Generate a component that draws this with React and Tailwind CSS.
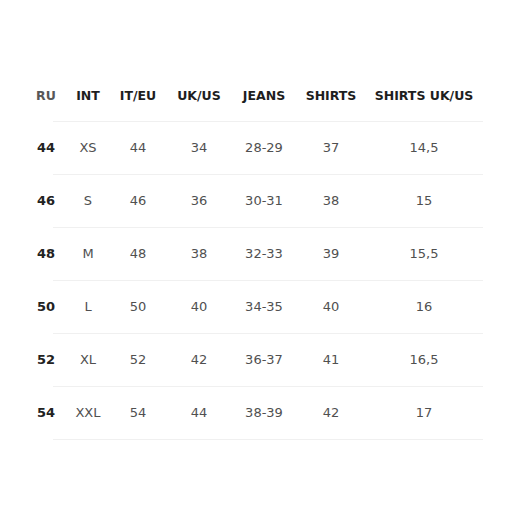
import React from "react";

const cols = [
  { label: "RU", w: "w-[32px] -ml-[23px]" },
  { label: "INT", w: "w-[52px]" },
  { label: "IT/EU", w: "w-[48px]" },
  { label: "UK/US", w: "w-[74px]" },
  { label: "JEANS", w: "w-[56px]" },
  { label: "SHIRTS", w: "w-[78px]" },
  { label: "SHIRTS UK/US", w: "w-[108px]" },
];

const rows = [
  ["44", "XS", "44", "34", "28-29", "37", "14,5"],
  ["46", "S", "46", "36", "30-31", "38", "15"],
  ["48", "M", "48", "38", "32-33", "39", "15,5"],
  ["50", "L", "50", "40", "34-35", "40", "16"],
  ["52", "XL", "52", "42", "36-37", "41", "16,5"],
  ["54", "XXL", "54", "44", "38-39", "42", "17"],
];

export default function App() {
  return (
    <div
      className="w-[516px] h-[516px] bg-white pt-[72px]"
      style={{ fontFamily: '"DejaVu Sans", "Open Sans", sans-serif' }}
    >
      <div className="ml-[53px] w-[430px]">
        {/* header */}
        <div className="flex items-center h-[50px] border-b border-[#f0f0f0] text-[12.5px] font-bold text-[#1e1e1e]">
          {cols.map((c, i) => (
            <div
              key={c.label}
              className={`${c.w} shrink-0 text-center whitespace-nowrap ${i === 0 ? "text-[#585858]" : ""}`}
            >
              {c.label}
            </div>
          ))}
        </div>

        {rows.map((r) => (
          <div
            key={r[0]}
            className="flex items-center h-[53px] border-b border-[#f0f0f0] text-[13px] text-[#505050]"
          >
            {r.map((v, i) => (
              <div
                key={i}
                className={`${cols[i].w} shrink-0 text-center whitespace-nowrap ${i === 0 ? "font-bold text-[#222]" : ""}`}
              >
                {v}
              </div>
            ))}
          </div>
        ))}
      </div>
    </div>
  );
}
